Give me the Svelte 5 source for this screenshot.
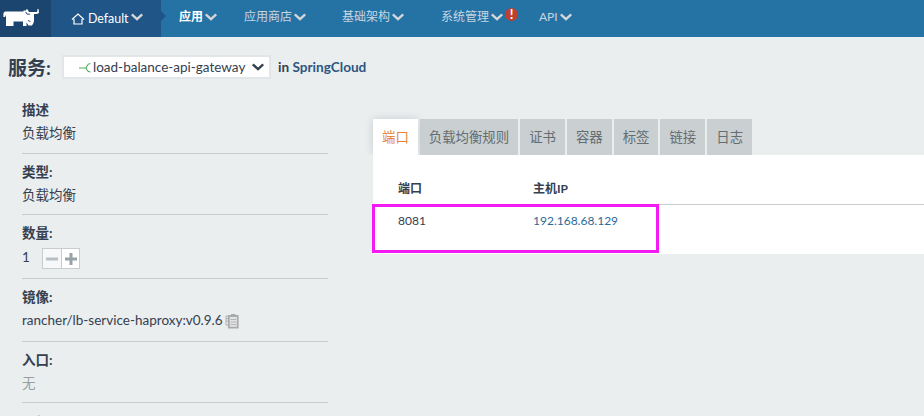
<script>
  const menu = [
    { label: '应用', left: 179, active: true },
    { label: '应用商店', left: 244 },
    { label: '基础架构', left: 342 },
    { label: '系统管理', left: 441, alert: true },
    { label: 'API', left: 539 },
  ];
  const tabs = ['端口', '负载均衡规则', '证书', '容器', '标签', '链接', '日志'];
</script>

{#snippet chevron()}
  <svg class="chev" width="12" height="8" viewBox="0 0 12 8"><path d="M.8 1.3 L6 6.2 L11.2 1.3" fill="none" stroke="currentColor" stroke-width="2.3" /></svg>
{/snippet}

<div class="page">
  <header>
    <div class="logo">
      <svg width="37" height="20" viewBox="0 0 37 20" fill="#fff">
        <path d="M2.5 2.5 H20.5 V1.5 H23 V.8 Q23.4 0 24.6 .4 L26 3 H31.5 L33.8 3 Q34.8 2.6 34.4 0 H35.6 L36 3.8 Q35.4 5.3 31 5 V11.5 Q31 14 29 16.5 H25.5 L23.5 13.5 V17 H20 V12.5 H10.5 V17 H3 V6 L2 8 H.4 V4.5 Q.8 2.5 2.5 2.5 Z" />
        <path d="M22.6 2.8 L24 5.2 H27 M25 11.5 L27.5 12.5" fill="none" stroke="#1b456e" stroke-width=".9" />
      </svg>
    </div>
    <div class="env">
      <svg width="14" height="12" viewBox="0 0 14 12"><path d="M1 6.5 L7 1 L13 6.5 M3 6 V11 H11 V6" fill="none" stroke="#fff" stroke-width="1.2" /></svg>
      <span>Default</span>{@render chevron()}
    </div>
    <nav>
      {#each menu as item, i}
        <div class="item" class:active={item.active} style:width={menu[i + 1] ? `${menu[i + 1].left - item.left}px` : 'auto'}>
          <span>{item.label}</span>{@render chevron()}
          {#if item.alert}<b class="alert">!</b>{/if}
        </div>
      {/each}
    </nav>
  </header>

  <div class="heading">
    <h1>服务:</h1>
    <div class="select">
      <svg width="14" height="12" viewBox="0 0 14 12" fill="none" stroke="#4cae5c" stroke-width="1.1"><path d="M0 7 H7 L8 5 Q9 2.5 11.5 2.5 M7 7 L8 9 Q9 11 11.5 11" /></svg>
      <span>load-balance-api-gateway</span>{@render chevron()}
    </div>
    <div class="stack">in <a>SpringCloud</a></div>
  </div>

  <main>
    <aside>
      <section class="first"><h2>描述</h2><p>负载均衡</p></section>
      <section><h2>类型:</h2><p>负载均衡</p></section>
      <section class="count"><h2>数量:</h2>
        <div class="scale"><span>1</span>
          <i class="btn off"><svg width="12" height="12"><path d="M0 6 H12" stroke="#b8c0c3" stroke-width="3" /></svg></i>
          <i class="btn"><svg width="12" height="12"><path d="M0 6 H12 M6 0 V12" stroke="#98a3a7" stroke-width="3" /></svg></i>
        </div>
      </section>
      <section class="image"><h2>镜像:</h2>
        <p>rancher/lb-service-haproxy:v0.9.6
          <svg width="14" height="15" viewBox="0 0 14 15"><path d="M3 2 H1 V11 H3 M1 4.5 H3 M1 7 H3" fill="none" stroke="#b0b3b4" /><path d="M3.8 2 H12.7 V13.7 H3.8 Z" fill="#e3e4e4" stroke="#a9abac" stroke-width="1.8" /><path d="M6 0 H10.5 V3 H6 Z" fill="#a9abac" /><path d="M5.5 5.5 H11 M5.5 8 H11 M5.5 10.5 H11" stroke="#b3b5b6" /></svg>
        </p>
      </section>
      <section><h2>入口:</h2><p class="none">无</p></section>
      <section class="last"><h2>主机:</h2></section>
    </aside>
    <div class="detail">
      <div class="tabs">
        {#each tabs as tab, i}<div class="tab" class:selected={i === 0}>{tab}</div>{/each}
      </div>
      <div class="panel">
        <div class="row head"><span>端口</span><span>主机IP</span></div>
        <div class="row body"><span>8081</span><a>192.168.68.129</a></div>
        <div class="mark"></div>
      </div>
    </div>
  </main>
</div>

<style>
  .page { width: 924px; height: 416px; overflow: hidden; background: #eaeeef; color: #34404f; font-family: Lato, "Noto Sans CJK SC", sans-serif; font-size: 13.5px; }
  header { display: flex; height: 37px; background: #2572a5; color: #fff; font-size: 12px; }
  .logo { width: 51px; box-sizing: border-box; padding: 9px 0 0 3px; background: #1b456e; }
  .env { position: relative; display: flex; align-items: center; width: 110px; box-sizing: border-box; padding-left: 20px; background: #205588; font-size: 12.4px; line-height: 37px; color: #fff; }
  .env span { margin: -1px 2px 0 3px; }
  .env::after { content: ''; position: absolute; left: 110px; top: 11px; border: 5px solid transparent; border-left-color: #205588; border-right: 0; }
  .chev { flex: none; display: block; }
  nav { display: flex; padding-left: 18px; height: 33px; }
  .item { display: flex; align-items: center; color: #c5d6e2; }
  .item > span { margin-right: 2px; line-height: 33px; }
  .item.active { color: #fff; font-weight: 700; }
  .item .chev { color: #d4d7d9; }
  .env .chev { color: #d4d7d9; margin-top: -3px; }
  .alert { width: 13px; height: 13px; margin: -4px 0 0 2px; border-radius: 50%; background: #bd4030; color: #fff; text-align: center; font-size: 13px; line-height: 13px; }
  .heading { display: flex; height: 60px; box-sizing: border-box; padding: 18px 0 0 8px; }
  h1 { margin: 0; width: 54px; font-size: 19px; line-height: 26px; white-space: nowrap; }
  .select { display: flex; align-items: center; width: 209px; height: 24px; box-sizing: border-box; border: 2px solid #e2e6e8; background: #fff; padding-left: 15px; }
  .select span { margin: 0 7px 0 0; font-size: 13.5px; line-height: 20px; white-space: nowrap; }
  .stack { margin-left: 7px; font-size: 13.6px; line-height: 24px; font-weight: 700; }
  .stack a { color: #2d5580; }
  main { display: flex; }
  aside { width: 306px; margin-left: 22px; }
  section { box-sizing: border-box; height: 61px; border-bottom: 1px solid #c8cccf; padding-top: 8px; }
  section.first { height: 57px; padding-top: 3px; }
  section.count { height: 64px; }
  section.image { height: 63px; }
  section.last { border: 0; padding-top: 10px; }
  h2 { margin: 0; font-size: 13.5px; line-height: 20px; }
  p { margin: 2px 0 0; line-height: 22px; white-space: nowrap; }
  p svg { vertical-align: -4px; margin-left: -1px; }
  .none { color: #999f9f; }
  .scale { display: flex; height: 21px; margin-top: 5px; }
  .scale span { width: 20px; line-height: 19px; }
  .btn { display: flex; align-items: center; justify-content: center; width: 19px; height: 21px; box-sizing: border-box; border: 1px solid #c8cccf; background: #fff; }
  .btn.off { border-right: 0; background: #f6f8f9; }
  .detail { flex: 1; margin: 22px 0 0 45px; }
  .tabs { display: flex; gap: 2px; }
  .tab { height: 36px; padding: 0 9px; background: #cacfd1; color: #646d72; line-height: 36px; white-space: nowrap; font-size: 13.4px; }
  .tab.selected { background: #fff; color: #e6853b; box-shadow: 0 0 8px #c8cccf; clip-path: inset(-8px -8px 0 -8px); }
  .panel { position: relative; height: 99px; background: #fff; font-size: 12px; }
  .row { display: flex; box-sizing: border-box; padding-left: 25px; }
  .row > :first-child { width: 135px; }
  .head { height: 50px; border-bottom: 1px solid #c8cccf; padding-top: 24px; font-weight: 700; line-height: 20px; }
  .body { padding-top: 6px; line-height: 20px; }
  .body a { color: #2d6a99; }
  .mark { position: absolute; left: -1px; top: 49px; width: 287px; height: 49px; box-sizing: border-box; border: 3px solid #f41af3; }
</style>
